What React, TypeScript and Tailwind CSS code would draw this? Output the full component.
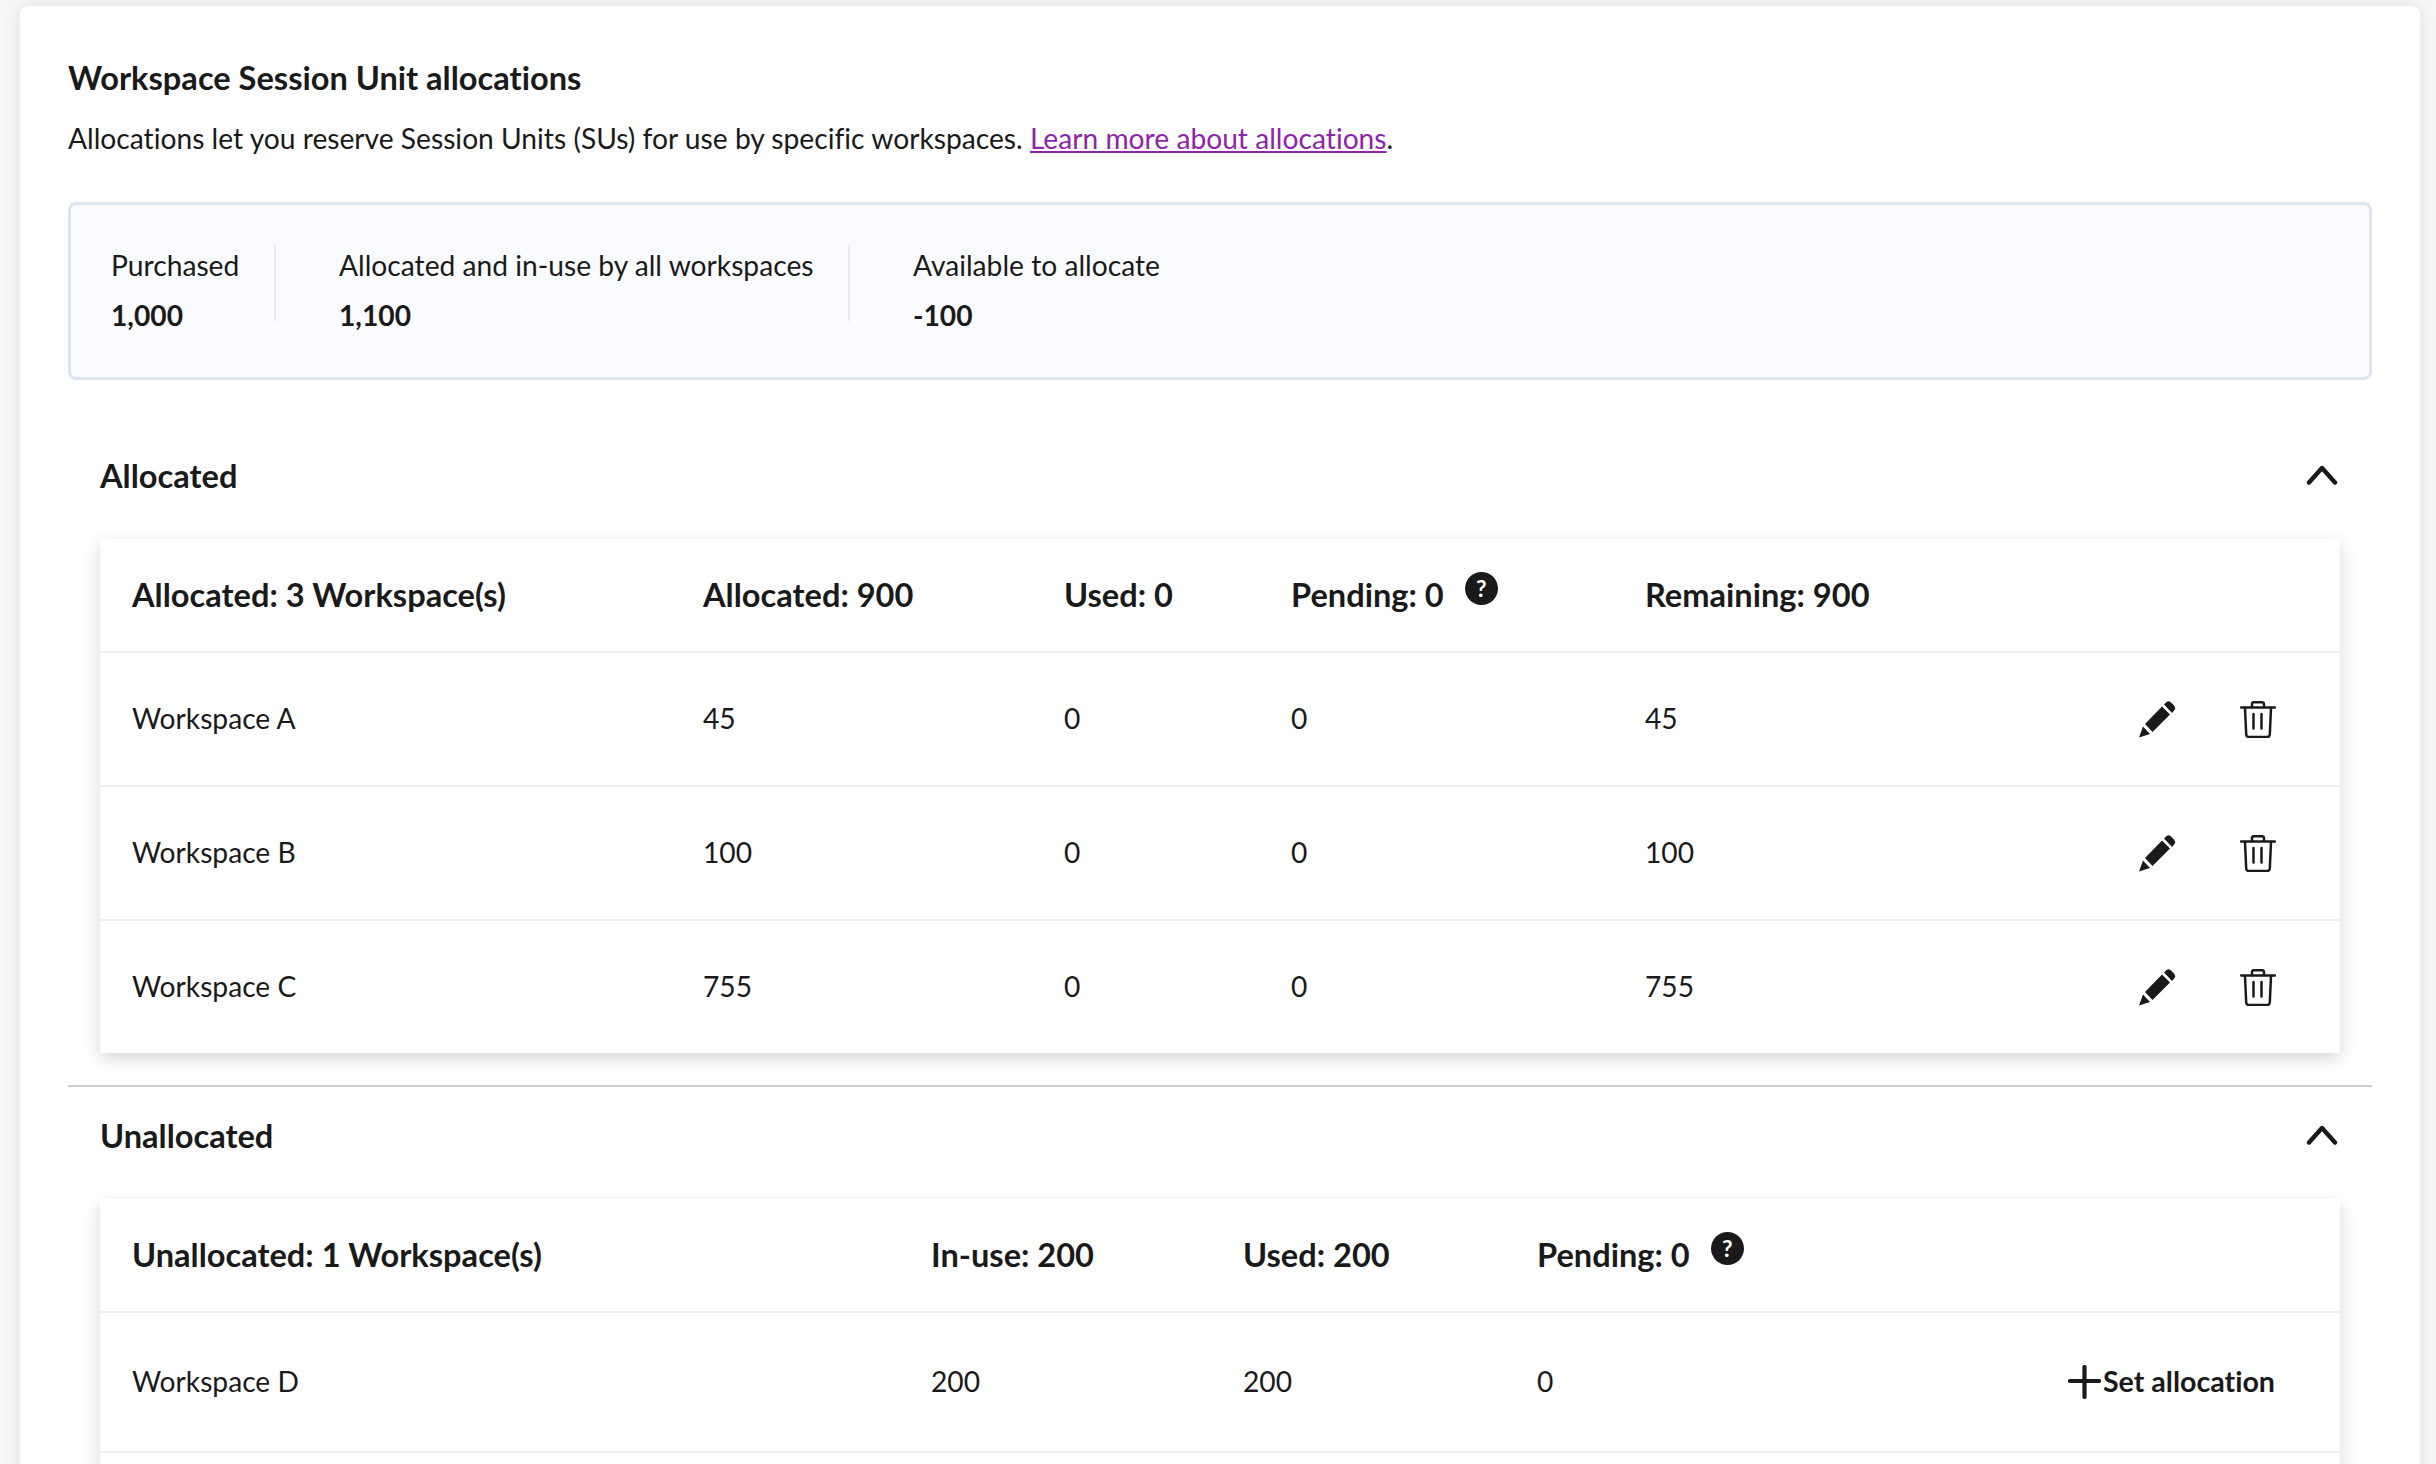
import React from "react";

const Pencil = () => (
  <svg width="37" height="37" viewBox="0 0 37 37" fill="#1a1a1a" aria-hidden="true">
    <path d="M0 36.5 L4 25.5 L11 33 Z" />
    <path d="M6 23 L23 5.5 L31 13.5 L13.5 31 Z" />
    <path d="M25 3.5 L27.5 1 Q29.5 -0.3 31.5 1 L35 4.5 Q37 7 35.5 9 L33 12 Z" />
  </svg>
);

const Trash = () => (
  <svg width="36" height="37" viewBox="0 0 36 37" fill="none" stroke="#1a1a1a" strokeWidth="2.5" strokeLinecap="round" strokeLinejoin="round" aria-hidden="true">
    <path d="M1 6.5 H35" />
    <path d="M12 6 V3 Q12 1.2 14 1.2 H22 Q24 1.2 24 3 V6" />
    <path d="M5 7 L6.2 33.5 Q6.4 36 9 36 H27 Q29.6 36 29.8 33.5 L31 7" />
    <path d="M13.5 13 V27.5 M21.5 13 V27.5" />
  </svg>
);

const Chevron = () => (
  <svg className="mb-[2px]" width="32" height="22" viewBox="0 0 32 22" fill="none" stroke="#1a1a1a" strokeWidth="4.4" strokeLinecap="round" strokeLinejoin="round" aria-hidden="true">
    <path d="M3 18.5 L16 4 L29 18.5" />
  </svg>
);

const Plus = () => (
  <svg width="33" height="34" viewBox="0 0 33 34" fill="none" stroke="#1a1a1a" strokeWidth="4.2" strokeLinecap="round" aria-hidden="true">
    <path d="M16.5 2 V32 M2 16 H31" />
  </svg>
);

const Help = () => (
  <span className="mb-[14px] ml-[21px] flex h-[33px] w-[33px] items-center justify-center rounded-full bg-[#1a1a1a] text-[23px] leading-none font-bold text-white">
    ?
  </span>
);

const Actions = () => (
  <div className="flex items-center justify-end gap-[64px] pr-[64px]">
    <Pencil />
    <Trash />
  </div>
);

const allocated = [
  ["Workspace A", "45", "0", "0", "45"],
  ["Workspace B", "100", "0", "0", "100"],
  ["Workspace C", "755", "0", "0", "755"],
];

const cols1 = "grid grid-cols-[571px_361px_227px_354px_1fr] items-center pl-[32px]";
const cols2 = "grid grid-cols-[799px_312px_294px_1fr] items-center pl-[32px]";

const SectionHeader = ({ title }: { title: string }) => (
  <div className="mb-[14px] flex h-[98px] items-center justify-between pr-[2px]">
    <h3 className="text-[32.6px] font-bold">{title}</h3>
    <Chevron />
  </div>
);

export default function App() {
  return (
    <div className="h-[1464px] overflow-hidden bg-[#f7f7f7] pt-[6px] pr-[16px] pl-[20px] text-[28.2px] leading-[40px] text-[#1a1a1a] [font-family:Lato,'Liberation_Sans',sans-serif] [font-variant-ligatures:none]">
      <div className="min-h-[1500px] rounded-[8px] bg-white px-[48px] pt-[52px] shadow-[0_0_20px_rgba(0,0,0,0.1)]">
        <h2 className="text-[32.6px] font-bold">Workspace Session Unit allocations</h2>
        <p className="mt-[20px]">
          Allocations let you reserve Session Units (SUs) for use by specific workspaces.{" "}
          <a className="text-[#8e24aa] underline">Learn more about allocations</a>.
        </p>

        <div className="mt-[44px] flex h-[178px] rounded-[8px] border-[3px] border-[#dde5f0] bg-[#f9fbff] pt-[40px] pl-[40px]">
          <div className="w-[163px]">
            <div>Purchased</div>
            <div className="mt-[10px] font-bold">1,000</div>
          </div>
          <div className="h-[76px] w-[2px] bg-[#e8ebf0]" />
          <div className="ml-[63px] w-[509px]">
            <div>Allocated and in-use by all workspaces</div>
            <div className="mt-[10px] font-bold">1,100</div>
          </div>
          <div className="h-[76px] w-[2px] bg-[#e8ebf0]" />
          <div className="ml-[63px]">
            <div>Available to allocate</div>
            <div className="mt-[10px] font-bold">-100</div>
          </div>
        </div>

        <section className="mt-[47px] px-[32px] pb-[32px]">
          <SectionHeader title="Allocated" />
          <div className="bg-white shadow-[0_6px_16px_rgba(0,0,0,0.16)]">
            <div className={`${cols1} h-[114px] border-b-2 border-[#eeeeee] text-[32.6px] font-bold`}>
              <div>Allocated: 3 Workspace(s)</div>
              <div>Allocated: 900</div>
              <div>Used: 0</div>
              <div className="flex items-center">
                Pending: 0
                <Help />
              </div>
              <div>Remaining: 900</div>
            </div>
            {allocated.map((r, i) => (
              <div key={r[0]} className={`${cols1} ${i < 2 ? "h-[134px] border-b-2 border-[#eeeeee]" : "h-[132px]"}`}>
                <div className="mb-[2px]">{r[0]}</div>
                <div className="mb-[2px]">{r[1]}</div>
                <div className="mb-[2px]">{r[2]}</div>
                <div className="mb-[2px]">{r[3]}</div>
                <div className="flex items-center justify-between">
                  <span className="mb-[2px]">{r[4]}</span>
                  <Actions />
                </div>
              </div>
            ))}
          </div>
        </section>

        <section className="border-t-2 border-[#cccccc] px-[32px]">
          <SectionHeader title="Unallocated" />
          <div className="bg-white shadow-[0_6px_16px_rgba(0,0,0,0.16)]">
            <div className={`${cols2} h-[114px] border-b-2 border-[#eeeeee] text-[32.6px] font-bold`}>
              <div>Unallocated: 1 Workspace(s)</div>
              <div>In-use: 200</div>
              <div>Used: 200</div>
              <div className="flex items-center">
                Pending: 0
                <Help />
              </div>
            </div>
            <div className={`${cols2} h-[140px] border-b-2 border-[#eeeeee]`}>
              <div className="mb-[2px]">Workspace D</div>
              <div className="mb-[2px]">200</div>
              <div className="mb-[2px]">200</div>
              <div className="flex items-center justify-between pr-[65px]">
                <span className="mb-[2px]">0</span>
                <span className="flex items-center gap-[2px] text-[28.6px] font-bold">
                  <Plus />
                  <span className="mb-[2px]">Set allocation</span>
                </span>
              </div>
            </div>
            <div className="h-[100px]" />
          </div>
        </section>
      </div>
    </div>
  );
}
